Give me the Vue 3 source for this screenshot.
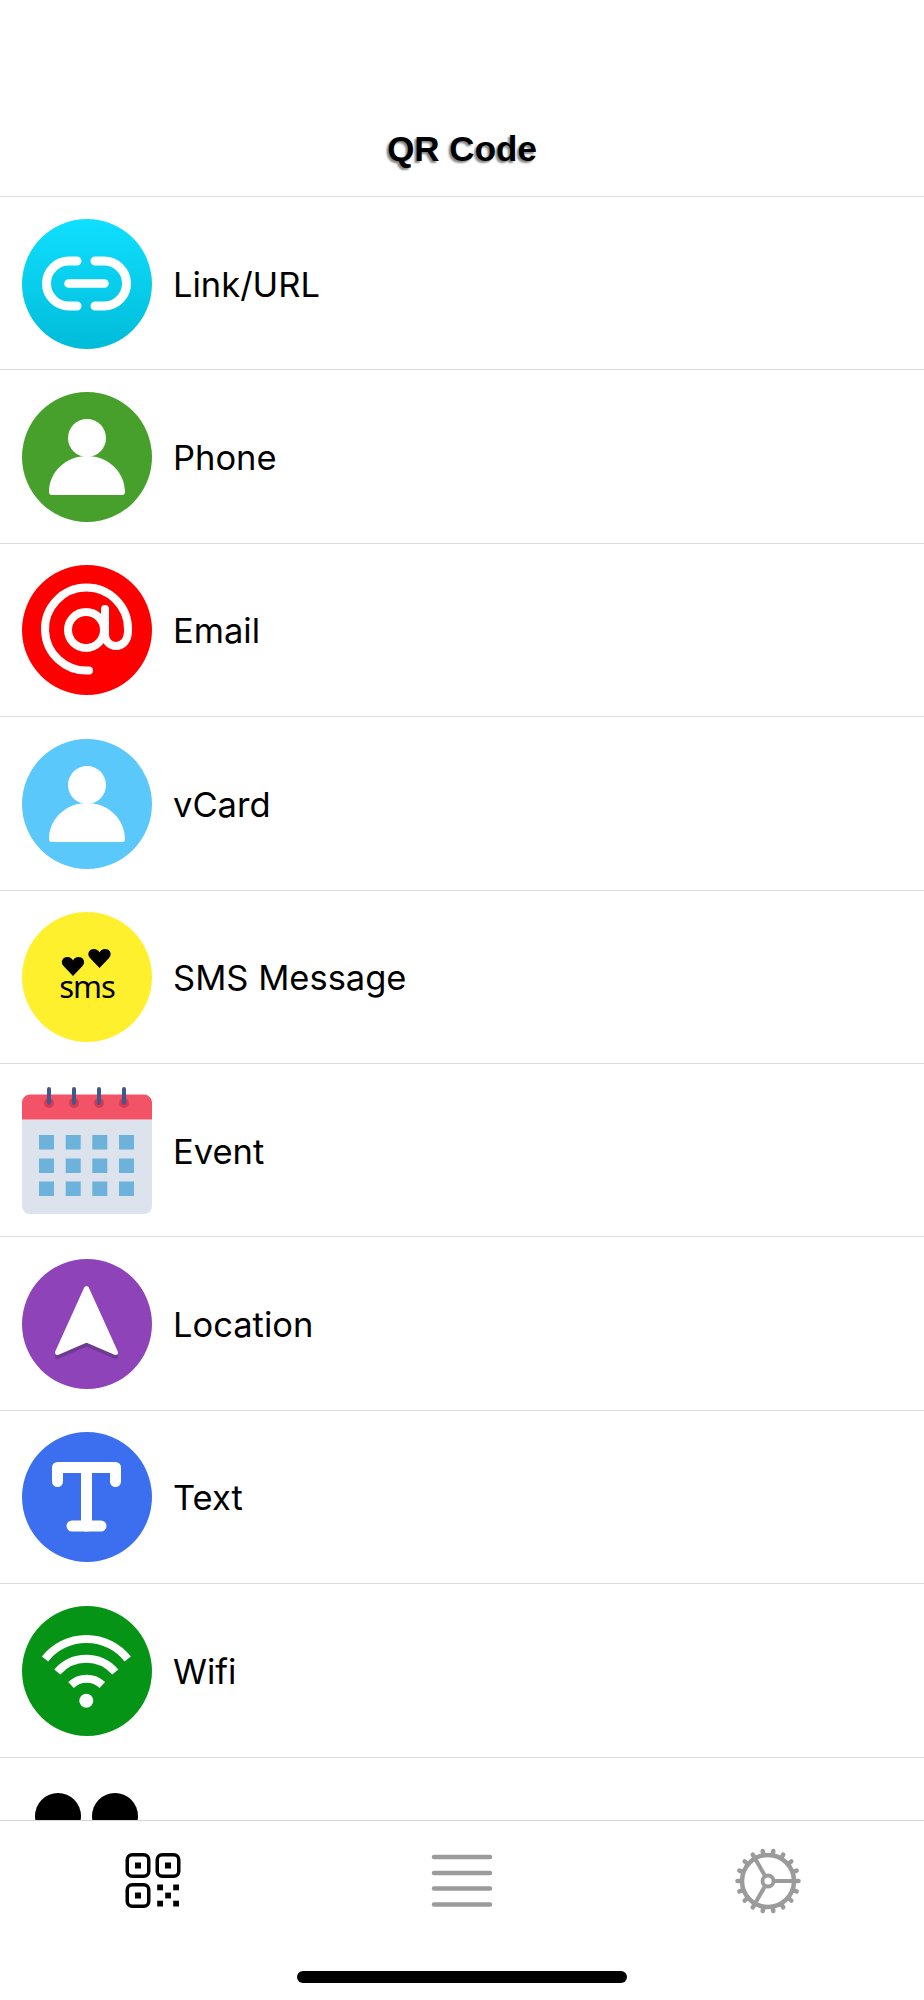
<template>
  <div class="screen">
    <header class="top-bar">
      <h1 class="title">QR Code</h1>
    </header>

    <ul class="list">
      <li v-for="item in items" :key="item.id" class="row">
        <svg class="row-icon" viewBox="0 0 130 130">
          <template v-if="item.id === 'link'">
            <defs>
              <linearGradient id="linkFill" x1="0" y1="0" x2="0" y2="1">
                <stop offset="0" stop-color="#10dfff" />
                <stop offset="1" stop-color="#00bcd9" />
              </linearGradient>
            </defs>
            <circle cx="65" cy="65" r="65" fill="url(#linkFill)" />
            <g fill="none" stroke="#fff" stroke-width="9" stroke-linecap="round">
              <path d="M55 42H47A22.500 22.500 0 0 0 47 87H55" />
              <path d="M73 42H82A22.500 22.500 0 0 1 82 87H73" />
              <path d="M46.500 64.500H82.500" stroke-width="8.500" />
            </g>
          </template>

          <template v-else-if="item.id === 'phone' || item.id === 'vcard'">
            <circle cx="65" cy="65" r="65" :fill="item.id === 'phone' ? '#46a02b' : '#5ac8fa'" />
            <circle cx="65" cy="46" r="19" fill="#fff" />
            <path d="M29 103H100A3 3 0 0 0 103 100C103 80 86 64 65 64C44 64 27 80 27 100A3 3 0 0 0 29 103Z" fill="#fff" />
          </template>

          <template v-else-if="item.id === 'email'">
            <circle cx="65" cy="65" r="65" fill="#ff0000" />
            <g fill="none" stroke="#fff" stroke-width="8" stroke-linecap="round">
              <path d="M67 105.500A41.500 41.500 0 1 1 106 64.500V66C106 76 100 81 94 81C88 81 83 76 83 70V44" />
              <circle cx="64" cy="65" r="18" />
            </g>
          </template>

          <template v-else-if="item.id === 'sms'">
            <circle cx="65" cy="65" r="65" fill="#fff02e" />
            <path d="M51 64L41.500 54C38 50 40.500 45 45.500 45C48 45 50 46.500 51 48.500C52 46.500 54 45 56.500 45C61.500 45 64 50 60.500 54Z" />
            <path d="M77.500 56L68 46C64.500 42 67 37 72 37C74.500 37 76.500 38.500 77.500 40.500C78.500 38.500 80.500 37 83 37C88 37 90.500 42 87 46Z" />
            <text x="65" y="86" text-anchor="middle" class="sms-text">sms</text>
          </template>

          <template v-else-if="item.id === 'event'">
            <path d="M0 33.500H130V120A8 8 0 0 1 122 128H8A8 8 0 0 1 0 120Z" fill="#dce3ec" />
            <path d="M0 33.500V16A8 8 0 0 1 8 8.500H122A8 8 0 0 1 130 16V33.500Z" fill="#f35366" />
            <g v-for="x in [27, 52, 77, 102]" :key="x">
              <circle :cx="x" cy="17" r="5" fill="#d93a52" />
              <path :d="`M${x} 3V17`" stroke="#41598a" stroke-width="4" stroke-linecap="round" />
            </g>
            <g fill="#6cb2da">
              <template v-for="y in [49, 72.500, 95.500]" :key="y">
                <rect v-for="x in [17, 43.700, 70.300, 97]" :key="x" :x="x" :y="y" width="15" height="14.500" />
              </template>
            </g>
          </template>

          <template v-else-if="item.id === 'location'">
            <circle cx="65" cy="65" r="65" fill="#8e44b8" />
            <path d="M64.500 29.500L93.500 93.500L64.500 81L35.500 93.500Z" transform="translate(0 4)" fill="#6f3a92" stroke="#6f3a92" stroke-width="5" stroke-linejoin="round" />
            <path d="M64.500 29.500L93.500 93.500L64.500 81L35.500 93.500Z" fill="#fff" stroke="#fff" stroke-width="5" stroke-linejoin="round" />
          </template>

          <template v-else-if="item.id === 'text'">
            <circle cx="65" cy="65" r="65" fill="#3c6ff0" />
            <g fill="none" stroke="#fff" stroke-width="11" stroke-linecap="round" stroke-linejoin="round">
              <path d="M35.500 49.500V35.500H93.500V49.500" />
              <path d="M64.500 36V94" />
              <path d="M50 94H79" />
            </g>
          </template>

          <template v-else-if="item.id === 'wifi'">
            <circle cx="65" cy="65" r="65" fill="#059415" />
            <g fill="none" stroke="#fff" stroke-width="8">
              <path d="M23 53A52.700 52.700 0 0 1 105.700 53" />
              <path d="M35.300 66A38.300 38.300 0 0 1 93.300 66" />
              <path d="M49 79A22.600 22.600 0 0 1 80.300 79" />
            </g>
            <circle cx="64.300" cy="94.700" r="7" fill="#fff" />
          </template>

          <template v-else>
            <circle cx="36" cy="37" r="23" fill="#000" />
            <circle cx="93" cy="37" r="23" fill="#000" />
          </template>
        </svg>
        <span v-if="item.label" class="row-label">{{ item.label }}</span>
      </li>
    </ul>

    <nav class="tab-bar">
      <div class="tabs">
        <button class="tab">
          <svg class="tab-icon" viewBox="0 0 70 70">
            <g transform="translate(6.500 7)">
              <g fill="none" stroke="#000" stroke-width="3.500">
                <rect x="1.750" y="1.750" width="21.500" height="21.500" rx="5" />
                <rect x="31.750" y="1.750" width="21.500" height="21.500" rx="5" />
                <rect x="1.750" y="31.750" width="21.500" height="21.500" rx="5" />
              </g>
              <rect x="9.500" y="9.500" width="6" height="6" />
              <rect x="39.500" y="9.500" width="6" height="6" />
              <rect x="9.500" y="39.500" width="6" height="6" />
              <rect x="31.700" y="31.500" width="5.800" height="5.800" />
              <rect x="47.700" y="31.500" width="5.800" height="5.800" />
              <rect x="39.700" y="39.600" width="5.800" height="5.800" />
              <rect x="31.700" y="47.700" width="5.800" height="5.800" />
              <rect x="47.700" y="47.700" width="5.800" height="5.800" />
            </g>
          </svg>
        </button>
        <button class="tab">
          <svg class="tab-icon" viewBox="0 0 70 70">
            <g stroke="#9b9b9b" stroke-width="4.500" stroke-linecap="round">
              <path d="M7 11H63" />
              <path d="M7 27H63" />
              <path d="M7 42.500H63" />
              <path d="M7 58.500H63" />
            </g>
          </svg>
        </button>
        <button class="tab">
          <svg class="tab-icon" viewBox="0 0 70 70">
            <g fill="none" stroke="#9b9b9b" transform="translate(33 35)">
              <circle r="26" stroke-width="4.500" />
              <circle r="5.500" stroke-width="3.800" />
              <path
                v-for="t in gearTeeth"
                :key="t.x1 + '-' + t.y1"
                :d="`M${t.x1} ${t.y1}L${t.x2} ${t.y2}`"
                stroke-width="4.500"
                stroke-linecap="round"
              />
              <path
                v-for="s in gearSpokes"
                :key="s.x + '-' + s.y"
                :d="`M${s.fromX} ${s.fromY}L${s.x} ${s.y}`"
                stroke-width="4"
              />
            </g>
          </svg>
        </button>
      </div>
      <div class="home-bar"></div>
    </nav>
  </div>
</template>

<script setup>
const items = [
  { id: 'link', label: 'Link/URL' },
  { id: 'phone', label: 'Phone' },
  { id: 'email', label: 'Email' },
  { id: 'vcard', label: 'vCard' },
  { id: 'sms', label: 'SMS Message' },
  { id: 'event', label: 'Event' },
  { id: 'location', label: 'Location' },
  { id: 'text', label: 'Text' },
  { id: 'wifi', label: 'Wifi' },
  { id: 'more', label: '' }
]

const polar = (r, deg) => {
  const a = (deg * Math.PI) / 180
  return { x: +(r * Math.cos(a)).toFixed(2), y: +(r * Math.sin(a)).toFixed(2) }
}

const gearTeeth = Array.from({ length: 18 }, (_, i) => {
  const from = polar(27, i * 20)
  const to = polar(30.5, i * 20)
  return { x1: from.x, y1: from.y, x2: to.x, y2: to.y }
})

// spokes start at the hub's edge so its hole stays open
const gearSpokes = [0, 120, 240].map((deg) => {
  const from = polar(7, deg)
  const to = polar(26, deg)
  return { fromX: from.x, fromY: from.y, x: to.x, y: to.y }
})
</script>

<style scoped>
.screen {
  height: 2000px;
  display: flex;
  flex-direction: column;
  background: #fff;
  font-family: Inter, "Noto Sans", sans-serif;
  color: #000;
}

.top-bar {
  height: 197px;
  box-sizing: border-box;
  flex-shrink: 0;
  display: flex;
  align-items: flex-end;
  justify-content: center;
  padding-bottom: 25px;
  border-bottom: 1px solid #dcdcdc;
}

.title {
  margin: 0;
  font-family: "Liberation Sans", Arial, sans-serif;
  font-size: 35px;
  line-height: 44px;
  font-weight: 700;
  text-shadow: -2px 2px 2px #888;
}

.list {
  flex: 1;
  min-height: 0;
  margin: 0;
  padding: 0;
  list-style: none;
  overflow: hidden;
}

.row {
  height: 173.4px;
  box-sizing: border-box;
  display: flex;
  align-items: center;
  gap: 21.5px;
  padding: 1px 0 0 21.5px;
  border-bottom: 1px solid #dcdcdc;
}

.row-icon {
  width: 130px;
  height: 130px;
  flex-shrink: 0;
}

.row-label {
  padding-top: 2px;
  font-size: 34.5px;
  line-height: 40px;
}

.sms-text {
  font-family: "Noto Sans", sans-serif;
  font-size: 31px;
  letter-spacing: -1px;
}

.tab-bar {
  height: 180px;
  flex-shrink: 0;
  box-sizing: border-box;
  display: flex;
  flex-direction: column;
  border-top: 1px solid #d6d6d6;
  background: #fff;
}

.tabs {
  display: grid;
  grid-template-columns: repeat(3, 1fr);
  padding-top: 25px;
}

.tab {
  display: flex;
  justify-content: center;
  padding: 0;
  border: none;
  background: none;
}

.tab-icon {
  width: 70px;
  height: 70px;
}

.home-bar {
  align-self: center;
  width: 330px;
  height: 12px;
  margin-top: 55px;
  border-radius: 6px;
  background: #000;
}
</style>

<style>
body {
  background: #fff;
}
</style>
